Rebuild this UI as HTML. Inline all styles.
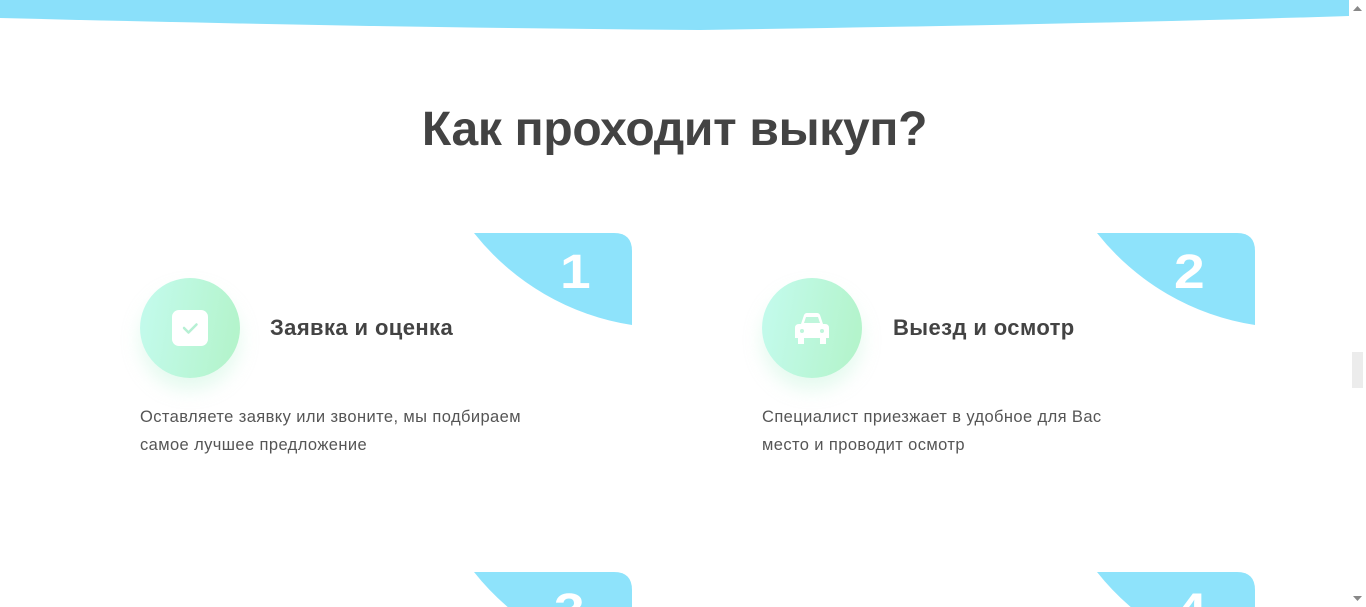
<!DOCTYPE html>
<html><head><meta charset="utf-8"><style>
*{margin:0;padding:0;box-sizing:border-box}
html,body{width:1366px;height:607px;overflow:hidden;background:#fff;font-family:"Liberation Sans","DejaVu Sans",sans-serif;position:relative}
.abs{position:absolute}
h1{position:absolute;left:0;width:1349px;top:102px;text-align:center;font-size:48px;font-weight:bold;color:#434343;letter-spacing:-0.3px}
.circ{width:100px;height:100px;border-radius:50%;background:linear-gradient(100deg,#c4fbee,#b2f3c8);box-shadow:0 12px 18px rgba(180,240,210,0.35)}
.ttl{font-size:22px;font-weight:bold;color:#434343;letter-spacing:0.4px}
.txt{font-size:16.5px;color:#555;line-height:28px;letter-spacing:0.4px}
.num{font-size:48px;font-weight:900;color:#fff;transform:scaleX(1.15)}
</style></head><body>
<svg class="abs" style="left:0;top:0" width="1349" height="35"><path d="M0,0H1349V16Q1100,24 700,30Q400,28 0,18Z" fill="#8ae0fa"/></svg>
<h1>Как проходит выкуп?</h1>

<svg class="abs" style="left:474px;top:233px" width="158" height="92"><path d="M0,0H140Q158,0 158,18V92A250,250 0 0 1 0,0Z" fill="#8ee3fb"/></svg>
<div class="abs num" style="left:562px;top:245px">1</div>
<div class="abs circ" style="left:140px;top:278px"></div>
<svg class="abs" style="left:172px;top:310px" width="36" height="36"><rect width="36" height="36" rx="7" fill="#fff"/><path d="M12,18l4.5,4.5 8-8" stroke="#b6f0d4" stroke-width="2.5" fill="none" stroke-linecap="round" stroke-linejoin="round"/></svg>
<div class="abs ttl" style="left:270px;top:315px">Заявка и оценка</div>
<div class="abs txt" style="left:140px;top:403px">Оставляете заявку или звоните, мы подбираем<br>самое лучшее предложение</div>

<svg class="abs" style="left:1097px;top:233px" width="158" height="92"><path d="M0,0H140Q158,0 158,18V92A250,250 0 0 1 0,0Z" fill="#8ee3fb"/></svg>
<div class="abs num" style="left:1176px;top:245px">2</div>
<div class="abs circ" style="left:762px;top:278px"></div>
<svg class="abs" style="left:793px;top:312px" width="38" height="34" viewBox="0 0 38 34"><path d="M8,12L11,3Q12,1 14,1H24Q26,1 27,3L30,12H32Q36,12 36,16V26H33V32H27V26H11V32H5V26H2V16Q2,12 6,12Z" fill="#fff"/><path d="M11,11L13,5H25L27,11Z" fill="#bff6dc"/><circle cx="9" cy="19" r="2" fill="#bff6dc"/><circle cx="29" cy="19" r="2" fill="#bff6dc"/></svg>
<div class="abs ttl" style="left:893px;top:315px">Выезд и осмотр</div>
<div class="abs txt" style="left:762px;top:403px">Специалист приезжает в удобное для Вас<br>место и проводит осмотр</div>

<svg class="abs" style="left:474px;top:572px" width="158" height="35"><path d="M0,0H140Q158,0 158,18V92A250,250 0 0 1 0,0Z" fill="#8ee3fb"/></svg>
<div class="abs num" style="left:556px;top:584px">3</div>
<svg class="abs" style="left:1097px;top:572px" width="158" height="35"><path d="M0,0H140Q158,0 158,18V92A250,250 0 0 1 0,0Z" fill="#8ee3fb"/></svg>
<div class="abs num" style="left:1178px;top:584px">4</div>

<div class="abs" style="left:1349px;top:0;width:17px;height:607px;background:#fff"></div>
<div class="abs" style="left:1352px;top:352px;width:11px;height:36px;background:#ececec"></div>
<svg class="abs" style="left:1353px;top:6px" width="9" height="6"><path d="M0,5L4.5,0 9,5Z" fill="#888"/></svg>
<svg class="abs" style="left:1353px;top:596px" width="9" height="6"><path d="M0,0L4.5,5 9,0Z" fill="#888"/></svg>
</body></html>
